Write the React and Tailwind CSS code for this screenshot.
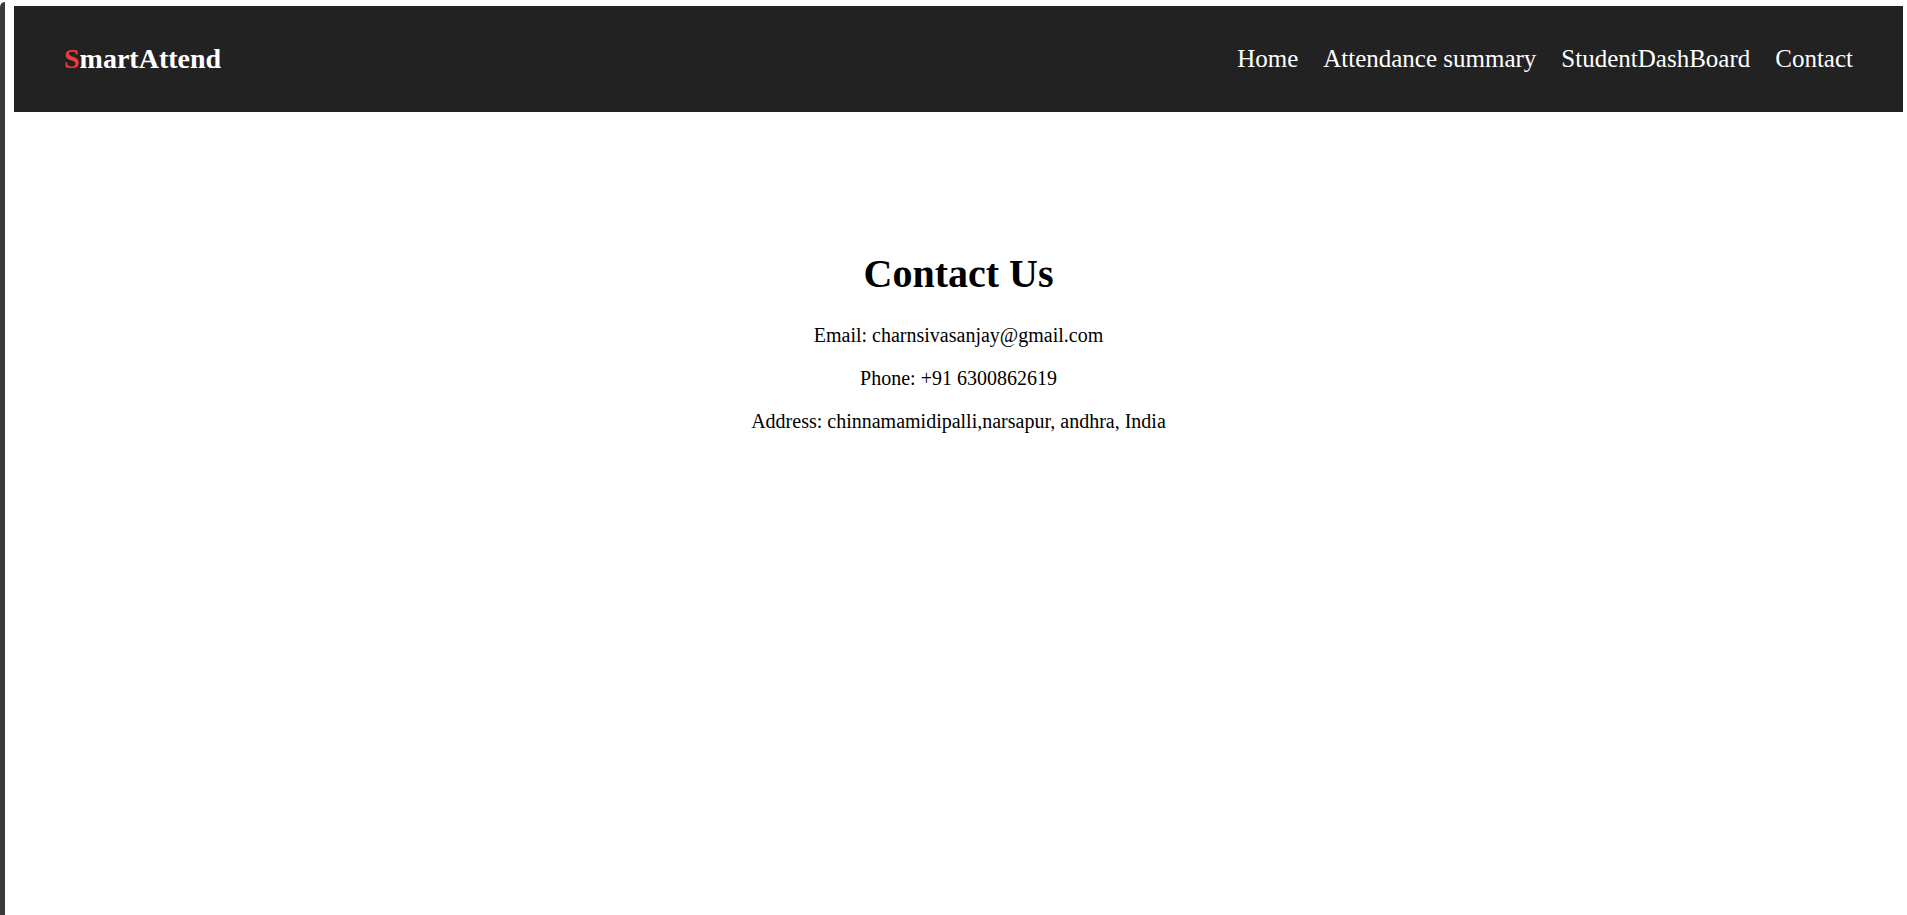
import React from "react";

export default function App() {
  return (
    <div
      className="flex h-[915px] w-full bg-white text-black"
      style={{ fontFamily: '"Liberation Serif", "Times New Roman", serif' }}
    >
      <div className="mt-[2px] w-[5px] shrink-0 rounded-tl-[8px] bg-[#3a3a3a]" />
      <div className="flex-1 pl-[9px] pr-[4px] pt-[6px]">
        <header className="flex h-[106px] items-center justify-between bg-[#222222] px-[50px]">
          <div className="text-[28px] font-bold leading-[normal] text-white">
            <span className="text-[#f23c3c]">S</span>martAttend
          </div>
          <nav className="flex items-center gap-[25px] text-[25px] leading-[normal] text-white">
            <a href="#" className="text-white">Home</a>
            <a href="#" className="text-white">Attendance summary</a>
            <a href="#" className="text-white">StudentDashBoard</a>
            <a href="#" className="text-white">Contact</a>
          </nav>
        </header>
        <main className="pt-[138px] text-center">
          <h1 className="mb-[27px] text-[40px] font-bold leading-[normal]">Contact Us</h1>
          <div className="flex flex-col gap-[20px] text-[20px] leading-[normal]">
            <p>Email: charnsivasanjay@gmail.com</p>
            <p>Phone: +91 6300862619</p>
            <p>Address: chinnamamidipalli,narsapur, andhra, India</p>
          </div>
        </main>
      </div>
    </div>
  );
}
